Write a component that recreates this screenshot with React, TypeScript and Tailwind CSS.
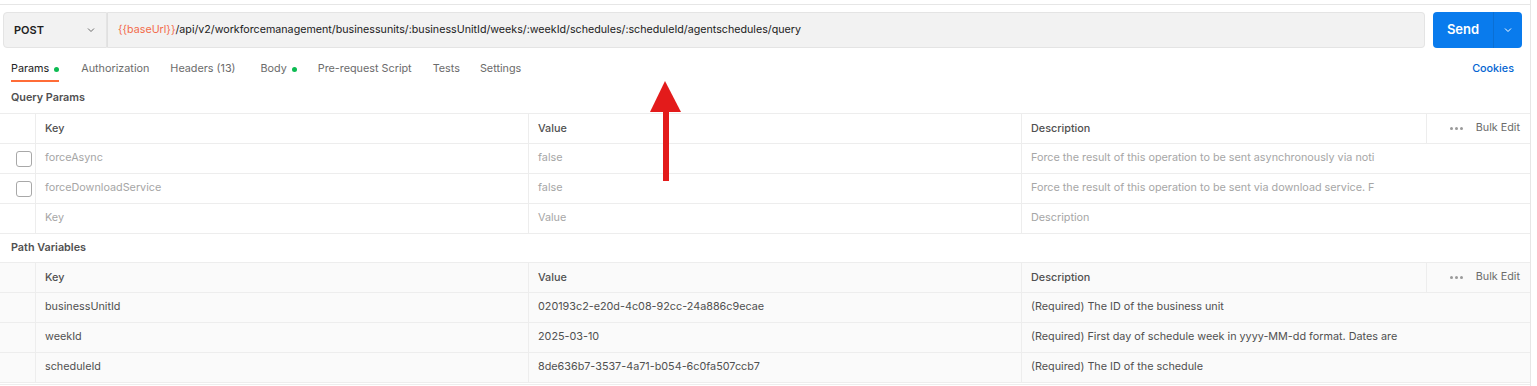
import React from "react";

const font = { fontFamily: "Inter, 'Noto Sans', sans-serif" };

function Checkbox() {
  return <div className="w-[16px] h-[16px] rounded-[3px] border border-[#a8a8a8] bg-white" />;
}

function HeaderRow() {
  return (
    <div className="flex h-[30px] border-b border-[#ededed] text-[#505050] font-medium">
      <div className="w-[36px] border-r border-[#ededed]" />
      <div className="w-[493px] border-r border-[#ededed] pl-[9px] flex items-center pt-[1px]">Key</div>
      <div className="w-[493px] border-r border-[#ededed] pl-[9px] flex items-center pt-[1px]">Value</div>
      <div className="w-[405px] border-r border-[#ededed] pl-[9px] flex items-center pt-[1px]">Description</div>
      <div className="flex-1 flex items-center justify-end pr-[10px] gap-[13px] font-normal text-[#6b6b6b]">
        <span className="flex gap-[2px] items-center">
          <span className="w-[3px] h-[3px] rounded-full bg-[#9a9a9a]" />
          <span className="w-[3px] h-[3px] rounded-full bg-[#9a9a9a]" />
          <span className="w-[3px] h-[3px] rounded-full bg-[#9a9a9a]" />
        </span>
        <span>Bulk Edit</span>
      </div>
    </div>
  );
}

function Row({ k, v, d, cb, color, bg }: { k: string; v: string; d: string; cb: boolean; color: string; bg: string }) {
  return (
    <div className={`flex h-[30px] border-b border-[#ededed] ${bg} ${color}`}>
      <div className="w-[36px] border-r border-[#ededed] flex items-center pl-[16px]">{cb ? <Checkbox /> : null}</div>
      <div className="w-[493px] border-r border-[#ededed] pl-[9px] flex items-center">{k}</div>
      <div className="w-[493px] border-r border-[#ededed] pl-[9px] flex items-center">{v}</div>
      <div className="flex-1 pl-[9px] flex items-center whitespace-nowrap overflow-hidden">{d}</div>
    </div>
  );
}

export default function App() {
  return (
    <div className="w-[1537px] h-[386px] bg-white text-[10.8px] relative overflow-hidden" style={font}>
      <div className="w-[1531px] h-full border-r border-[#e6e6e6] pt-[4px]">
        <div className="border-t border-[#e6e6e6]" />
        {/* request bar */}
        <div className="flex items-stretch h-[36px] mt-[7px] pl-[3px] pr-[8px]">
          <div className="w-[104px] rounded-l-[4px] border border-[#e4e4e4] bg-[#f2f2f2] flex items-center justify-between pl-[10px] pr-[10px]">
            <span className="font-semibold text-[#212121] text-[11px]">POST</span>
            <svg width="10" height="10" viewBox="0 0 10 10"><path d="M2 3.5 L5 6.5 L8 3.5" fill="none" stroke="#6b6b6b" strokeWidth="1" /></svg>
          </div>
          <div className="flex-1 rounded-r-[4px] border border-l-[#e0e0e0] border-[#e4e4e4] bg-[#f2f2f2] flex items-center pl-[10px] text-[#212121] whitespace-nowrap text-[10.7px]">
            <span className="text-[#f26b4a]">{"{{baseUrl}}"}</span>
            <span>/api/v2/workforcemanagement/businessunits/:businessUnitId/weeks/:weekId/schedules/:scheduleId/agentschedules/query</span>
          </div>
          <div className="ml-[8px] w-[89px] rounded-[4px] bg-[#097bed] flex text-white">
            <div className="w-[61px] flex items-center justify-center font-semibold text-[13px] border-r border-[#0a6fd4]">Send</div>
            <div className="flex-1 flex items-center justify-center">
              <svg width="10" height="10" viewBox="0 0 10 10"><path d="M2 3.5 L5 6.5 L8 3.5" fill="none" stroke="#ffffff" strokeWidth="1" /></svg>
            </div>
          </div>
        </div>
        {/* tabs */}
        <div className="flex h-[35px] items-stretch pl-[11px] pr-[16px] pt-[8px] text-[#6b6b6b]">
          <div className="relative flex items-center gap-[5px] text-[#212121] mr-[22px]">
            <span>Params</span>
            <span className="w-[5px] h-[5px] rounded-full bg-[#0cbb52]" />
            <div className="absolute left-0 right-0 bottom-[1px] h-[2px] bg-[#ff6c37]" />
          </div>
          <div className="flex items-center mr-[21px]">Authorization</div>
          <div className="flex items-center mr-[25px]">Headers (13)</div>
          <div className="flex items-center gap-[5px] mr-[21px]">
            <span>Body</span>
            <span className="w-[5px] h-[5px] rounded-full bg-[#0cbb52]" />
          </div>
          <div className="flex items-center mr-[21px]">Pre-request Script</div>
          <div className="flex items-center mr-[20px]">Tests</div>
          <div className="flex items-center">Settings</div>
          <div className="flex-1" />
          <div className="flex items-center text-[#0265d2] font-medium">Cookies</div>
        </div>
        {/* query params */}
        <div className="h-[30px] flex items-center pl-[11px] pt-[1px] font-semibold text-[#505050]">Query Params</div>
        <div className="border-t border-[#ededed]">
          <HeaderRow />
          <Row k="forceAsync" v="false" d="Force the result of this operation to be sent asynchronously via noti" cb color="text-[#a6a6a6]" bg="bg-white" />
          <Row k="forceDownloadService" v="false" d="Force the result of this operation to be sent via download service. F" cb color="text-[#a6a6a6]" bg="bg-white" />
          <Row k="Key" v="Value" d="Description" cb={false} color="text-[#a6a6a6]" bg="bg-white" />
        </div>
        <div className="h-[28px] flex items-center pl-[11px] font-semibold text-[#505050]">Path Variables</div>
        <div className="border-t border-[#ededed] bg-[#fafafa]">
          <HeaderRow />
          <Row k="businessUnitId" v="020193c2-e20d-4c08-92cc-24a886c9ecae" d="(Required) The ID of the business unit" cb={false} color="text-[#505050]" bg="bg-[#fafafa]" />
          <Row k="weekId" v="2025-03-10" d="(Required) First day of schedule week in yyyy-MM-dd format. Dates are" cb={false} color="text-[#505050]" bg="bg-[#fafafa]" />
          <Row k="scheduleId" v="8de636b7-3537-4a71-b054-6c0fa507ccb7" d="(Required) The ID of the schedule" cb={false} color="text-[#505050]" bg="bg-[#fafafa]" />
          <div className="h-[2px] bg-white border-b border-[#ededed]" />
        </div>
      </div>
      {/* annotation arrow */}
      <svg className="absolute left-0 top-0 pointer-events-none" width="1537" height="386">
        <polygon points="665,81 650,112 681,112" fill="#e31b1b" />
        <rect x="663" y="111" width="6" height="70" fill="#e31b1b" />
      </svg>
    </div>
  );
}
